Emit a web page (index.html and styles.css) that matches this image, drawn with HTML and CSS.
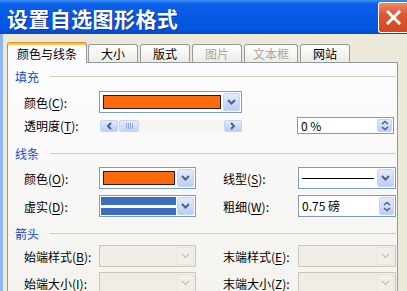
FILE: index.html
```html
<!DOCTYPE html>
<html lang="zh-CN">
<head>
    <meta charset="UTF-8">
    <title>设置自选图形格式</title>
    <link rel="stylesheet" href="styles.css">
</head>
<body>
    <div class="window">
        <div class="titlebar">
            <span class="title">设置自选图形格式</span>
            <div class="close">
                <svg width="15" height="15" viewBox="0 0 15 15"><path d="M2 2 L13 13 M13 2 L2 13" stroke="#fff" stroke-width="3" stroke-linecap="square"/></svg>
            </div>
        </div>

        <div class="frame">
            <div class="tabs">
                <div class="tab active">颜色与线条</div>
                <div class="tab">大小</div>
                <div class="tab">版式</div>
                <div class="tab disabled">图片</div>
                <div class="tab disabled">文本框</div>
                <div class="tab">网站</div>
            </div>

            <div class="panel">
                <!-- 填充 -->
                <div class="group">
                    <span class="group-name">填充</span>
                    <span class="group-line"></span>
                </div>
                <div class="row wide first">
                    <label>颜色(<u>C</u>):</label>
                    <div class="combo">
                        <div class="combo-value"><span class="swatch"></span></div>
                        <span class="drop"><svg width="9" height="6" viewBox="0 0 9 6"><path d="M1 1 L4.5 4.5 L8 1" fill="none" stroke="#4d6185" stroke-width="2"/></svg></span>
                    </div>
                </div>
                <div class="row wide second">
                    <label>透明度(<u>T</u>):</label>
                    <div class="scrollbar">
                        <span class="sb-btn"><svg width="6" height="8" viewBox="0 0 6 8"><path d="M5 1 L2 4 L5 7" fill="none" stroke="#4d6185" stroke-width="2"/></svg></span>
                        <span class="sb-thumb"><i></i><i></i><i></i><i></i></span>
                        <span class="sb-track"></span>
                        <span class="sb-btn"><svg width="6" height="8" viewBox="0 0 6 8"><path d="M1 1 L4 4 L1 7" fill="none" stroke="#4d6185" stroke-width="2"/></svg></span>
                    </div>
                    <span></span>
                    <div class="spin">
                        <span class="spin-value">0 %</span>
                        <span class="spin-btn"><svg width="8" height="11" viewBox="0 0 8 11"><path d="M1 4 L4 1.5 L7 4 M1 7 L4 9.5 L7 7" fill="none" stroke="#4d6185" stroke-width="1.6"/></svg></span>
                    </div>
                </div>

                <!-- 线条 -->
                <div class="group next">
                    <span class="group-name">线条</span>
                    <span class="group-line"></span>
                </div>
                <div class="row first">
                    <label>颜色(<u>O</u>):</label>
                    <div class="combo">
                        <div class="combo-value"><span class="swatch"></span></div>
                        <span class="drop"><svg width="9" height="6" viewBox="0 0 9 6"><path d="M1 1 L4.5 4.5 L8 1" fill="none" stroke="#4d6185" stroke-width="2"/></svg></span>
                    </div>
                    <label class="right">线型(<u>S</u>):</label>
                    <div class="combo">
                        <div class="combo-value"><span class="solid-line"></span></div>
                        <span class="drop"><svg width="9" height="6" viewBox="0 0 9 6"><path d="M1 1 L4.5 4.5 L8 1" fill="none" stroke="#4d6185" stroke-width="2"/></svg></span>
                    </div>
                </div>
                <div class="row">
                    <label>虚实(<u>D</u>):</label>
                    <div class="combo">
                        <div class="combo-value dash"><span class="dash-line"></span></div>
                        <span class="drop"><svg width="9" height="6" viewBox="0 0 9 6"><path d="M1 1 L4.5 4.5 L8 1" fill="none" stroke="#4d6185" stroke-width="2"/></svg></span>
                    </div>
                    <label class="right">粗细(<u>W</u>):</label>
                    <div class="spin">
                        <span class="spin-value">0.75 磅</span>
                        <span class="spin-btn"><svg width="8" height="11" viewBox="0 0 8 11"><path d="M1 4 L4 1.5 L7 4 M1 7 L4 9.5 L7 7" fill="none" stroke="#4d6185" stroke-width="1.6"/></svg></span>
                    </div>
                </div>

                <!-- 箭头 -->
                <div class="group last">
                    <span class="group-name">箭头</span>
                    <span class="group-line"></span>
                </div>
                <div class="row arrows">
                    <label>始端样式(<u>B</u>):</label>
                    <div class="combo off">
                        <div class="combo-value"></div>
                        <span class="drop"><svg width="9" height="6" viewBox="0 0 9 6"><path d="M1 1 L4.5 4.5 L8 1" fill="none" stroke="#c9c7ba" stroke-width="1.5"/></svg></span>
                    </div>
                    <label class="right">末端样式(<u>E</u>):</label>
                    <div class="combo off">
                        <div class="combo-value"></div>
                        <span class="drop"><svg width="9" height="6" viewBox="0 0 9 6"><path d="M1 1 L4.5 4.5 L8 1" fill="none" stroke="#c9c7ba" stroke-width="1.5"/></svg></span>
                    </div>
                </div>
                <div class="row arrows">
                    <label>始端大小(<u>I</u>):</label>
                    <div class="combo off">
                        <div class="combo-value"></div>
                        <span class="drop"><svg width="9" height="6" viewBox="0 0 9 6"><path d="M1 1 L4.5 4.5 L8 1" fill="none" stroke="#c9c7ba" stroke-width="1.5"/></svg></span>
                    </div>
                    <label class="right">末端大小(<u>Z</u>):</label>
                    <div class="combo off">
                        <div class="combo-value"></div>
                        <span class="drop"><svg width="9" height="6" viewBox="0 0 9 6"><path d="M1 1 L4.5 4.5 L8 1" fill="none" stroke="#c9c7ba" stroke-width="1.5"/></svg></span>
                    </div>
                </div>
            </div>
        </div>
    </div>
</body>
</html>
```

FILE: styles.css
```css
body {
    margin: 0;
    width: 407px;
    height: 291px;
    overflow: hidden;
    background-color: #ece9d8;
    font-family: "Noto Sans CJK SC", "Liberation Sans", sans-serif;
    font-size: 12px;
    color: #000;
}

.window {
    width: 407px;
    height: 291px;
    display: flex;
    flex-direction: column;
}

.titlebar {
    height: 34px;
    flex-shrink: 0;
    display: flex;
    align-items: center;
    justify-content: space-between;
    padding-left: 7px;
    background: linear-gradient(180deg, #3d8ef6 0, #0a5fe9 4px, #0559e5 50%, #0556e1 85%, #0347cc 100%);
}

.title {
    color: #fff;
    font-size: 21px;
    font-weight: bold;
    letter-spacing: 0.4px;
    line-height: 1;
    padding-top: 2px;
    text-shadow: 1px 1px 0 #0b2e9e;
}

.close {
    width: 28px;
    height: 29px;
    display: flex;
    align-items: center;
    justify-content: center;
    border: 1px solid #fff;
    border-right: none;
    border-radius: 3px 0 0 3px;
    background: linear-gradient(180deg, #ec8a6c 0, #de5634 40%, #d3461f 100%);
}

.frame {
    flex: 1;
    border-left: 3px solid #8fb6ee;
    padding: 8px 0 0 4px;
    display: flex;
    flex-direction: column;
}

.tabs {
    display: flex;
    align-items: flex-end;
    height: 20px;
    position: relative;
    z-index: 1;
}

.tab {
    box-sizing: border-box;
    min-width: 50px;
    height: 18px;
    padding: 0 8px;
    margin-right: 2px;
    border: 1px solid #919b9c;
    border-bottom: none;
    border-radius: 3px 3px 0 0;
    background: linear-gradient(180deg, #ffffff, #ecebe5);
    text-align: center;
    line-height: 17px;
}

.tab.active {
    height: 21px;
    margin-bottom: -1px;
    padding: 0 9px;
    margin-right: 1px;
    border-top-color: #e68b2c;
    box-shadow: inset 0 2px 0 #fbc54a;
    background: #fcfcfe;
    line-height: 21px;
}

.tab.disabled {
    color: #aca899;
}

.panel {
    width: 389px;
    flex: 1;
    border: 1px solid #919b9c;
    border-bottom: none;
    background: linear-gradient(180deg, #fcfcfe, #f4f3ee);
    padding-top: 6px;
}

.group {
    display: flex;
    align-items: center;
    height: 14px;
    padding-left: 7px;
}

.group.next {
    margin-top: 12px;
}

.group.last {
    margin-top: 9px;
}

.group-name {
    width: 35px;
    color: #1549cf;
}

.group-line {
    flex: 1;
    border-top: 1px solid #d0d0bf;
    margin-right: 1px;
}

.row {
    display: grid;
    grid-template-columns: 75px 97px 102px 98px;
    align-items: center;
    height: 22px;
    padding-left: 16px;
    margin-top: 6px;
}

.row.first {
    margin-top: 7px;
}

.row.wide {
    grid-template-columns: 75px 143px 55px 97px;
}

.row.wide.first {
    margin-top: 8px;
}

.row.second {
    height: 17px;
    margin-top: 4px;
}

.row.arrows {
    margin-top: 5px;
}

.row label {
    white-space: nowrap;
}

.row label.right {
    padding-left: 27px;
}

u {
    text-decoration-thickness: 1px;
    text-underline-offset: 2px;
}

.combo {
    box-sizing: border-box;
    height: 22px;
    border: 1px solid #7f9db9;
    background-color: #fff;
    display: flex;
    padding: 1px;
}

.combo-value {
    flex: 1;
    display: flex;
    align-items: center;
    padding: 2px 2px 2px 2px;
}

.swatch {
    flex: 1;
    align-self: stretch;
    background-color: #fd6a0d;
    border: 1px solid #2b1a10;
}

.solid-line {
    flex: 1;
    border-top: 1px solid #000;
    margin-right: 1px;
}

.combo-value.dash {
    background-color: #3e6dbf;
    padding: 0;
    margin-right: 1px;
}

.dash-line {
    flex: 1;
    height: 3px;
    background-color: #fff;
}

.drop {
    width: 17px;
    box-sizing: border-box;
    border: 1px solid #c3d3fd;
    border-radius: 2px;
    background: linear-gradient(180deg, #e3ebfd, #bacdf8);
    display: flex;
    align-items: center;
    justify-content: center;
}

.combo.off {
    border-color: #c9c7ba;
    background-color: #efede5;
}

.combo.off .drop {
    border-color: #e8e6dd;
    background: #f1efe8;
}

.scrollbar {
    height: 12px;
    display: flex;
    gap: 1px;
    background-color: #f6f5f0;
    margin-left: 1px;
}

.sb-btn {
    width: 18px;
    border: 1px solid #c3d3fd;
    border-radius: 2px;
    box-sizing: border-box;
    background: linear-gradient(180deg, #e3ebfd, #bacdf8);
    display: flex;
    align-items: center;
    justify-content: center;
}

.sb-thumb {
    width: 20px;
    box-sizing: border-box;
    border: 1px solid #c3d3fd;
    border-radius: 2px;
    background: linear-gradient(180deg, #e3ebfd, #c4d4f8);
    display: flex;
    align-items: center;
    justify-content: center;
    gap: 1px;
}

.sb-thumb i {
    width: 1px;
    height: 6px;
    background-color: #8ea6de;
}

.sb-track {
    flex: 1;
}

.spin {
    box-sizing: border-box;
    height: 17px;
    border: 1px solid #7f9db9;
    background-color: #fff;
    display: flex;
    padding: 1px;
}

.row .spin {
    height: 22px;
}

.row.second .spin {
    height: 17px;
}

.spin-value {
    flex: 1;
    padding-left: 2px;
    display: flex;
    align-items: center;
    line-height: 1;
}

.spin-btn {
    width: 15px;
    box-sizing: border-box;
    border: 1px solid #c3d3fd;
    border-radius: 2px;
    background: linear-gradient(180deg, #e3ebfd, #bacdf8);
    display: flex;
    align-items: center;
    justify-content: center;
}
```
